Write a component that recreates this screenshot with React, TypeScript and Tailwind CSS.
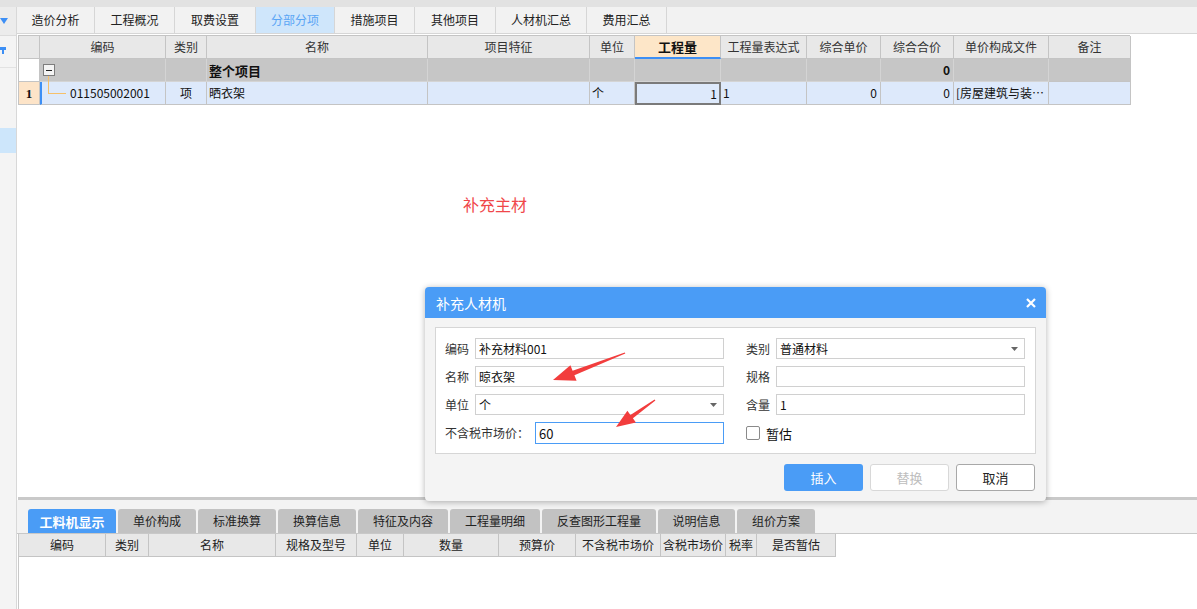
import React from "react";

const topTabs: { label: string; w: string; active?: boolean }[] = [
  { label: "造价分析", w: "w-[78px]" },
  { label: "工程概况", w: "w-[80px]" },
  { label: "取费设置", w: "w-[81px]" },
  { label: "分部分项", w: "w-[79px]", active: true },
  { label: "措施项目", w: "w-[80px]" },
  { label: "其他项目", w: "w-[81px]" },
  { label: "人材机汇总", w: "w-[91px]" },
  { label: "费用汇总", w: "w-[80px]" },
];

const mainCols =
  "grid grid-cols-[21px_126px_41px_221px_162px_45px_86px_86px_74px_73px_95px_82px]";

const headers = [
  "",
  "编码",
  "类别",
  "名称",
  "项目特征",
  "单位",
  "工程量",
  "工程量表达式",
  "综合单价",
  "综合合价",
  "单价构成文件",
  "备注",
];

const bottomTabs: { label: string; w: string; active?: boolean }[] = [
  { label: "工料机显示", w: "w-[88px]", active: true },
  { label: "单价构成", w: "w-[78px]" },
  { label: "标准换算", w: "w-[78px]" },
  { label: "换算信息", w: "w-[78px]" },
  { label: "特征及内容", w: "w-[90px]" },
  { label: "工程量明细", w: "w-[90px]" },
  { label: "反查图形工程量", w: "w-[114px]" },
  { label: "说明信息", w: "w-[77px]" },
  { label: "组价方案", w: "w-[78px]" },
];

const bottomHeaders: { label: string; w: string }[] = [
  { label: "编码", w: "w-[87px]" },
  { label: "类别", w: "w-[43px]" },
  { label: "名称", w: "w-[127px]" },
  { label: "规格及型号", w: "w-[81px]" },
  { label: "单位", w: "w-[47px]" },
  { label: "数量", w: "w-[95px]" },
  { label: "预算价", w: "w-[77px]" },
  { label: "不含税市场价", w: "w-[85px]" },
  { label: "含税市场价", w: "w-[65px]" },
  { label: "税率", w: "w-[31px]" },
  { label: "是否暂估", w: "w-[79px]" },
];

const Sidebar = () => (
  <div className="w-[17px] h-full bg-[#f4f4f4] border-r border-[#d8d8d8] flex flex-col">
    <div className="h-[29px] bg-[#ececec] border-b border-[#dcdcdc] pt-[11px]">
      <svg width="8" height="6" viewBox="0 0 8 6">
        <path d="M0 0h8L4 6z" fill="#3d8ff5" />
      </svg>
    </div>
    <div className="h-[32px] border-b border-[#e2e2e2] pt-[11px]">
      <div className="w-[6px] h-[3px] bg-[#3d8ff5]" />
      <div className="ml-[2px] w-[2px] h-[4px] bg-[#3d8ff5]" />
    </div>
    <div className="h-[60px]" />
    <div className="h-[25px] bg-[#cde6fb]" />
  </div>
);

const TopTabs = () => (
  <div className="h-[27px] bg-[#f2f2f2] border-b border-[#d6d6d6] flex">
    {topTabs.map((t) => (
      <div
        key={t.label}
        className={`${t.w} h-full border-r border-[#d6d6d6] flex items-center justify-center leading-none ${
          t.active ? "bg-[#cfe6fb] text-[#5aa5f5]" : "text-[#222]"
        }`}
      >
        {t.label}
      </div>
    ))}
  </div>
);

const MainGrid = () => (
  <div className={`${mainCols} w-[1112px] border-t border-l border-[#c4c4c4]`}>
    {/* header */}
    {headers.map((h, i) => (
      <div
        key={`h${i}`}
        className={`h-[23px] border-r border-b border-[#c4c4c4] flex items-center justify-center leading-none ${
          i === 6
            ? "bg-[#fde6c8] font-bold text-[13px] text-[#111] border-b-2 border-b-[#3d8ff5]"
            : "bg-[#e8e8e8] text-[#333]"
        }`}
      >
        {h}
      </div>
    ))}

    {/* 整个项目 */}
    <div className="h-[23px] bg-white border-r border-b border-[#c4c4c4]" />
    <div className="relative h-[23px] bg-[#c6c6c6] border-r border-b border-[#d4d4d4]">
      <div className="absolute left-[3px] top-[5px] w-[12px] h-[12px] border border-[#7d7d7d] bg-[#f4f4f4] flex items-center justify-center">
        <div className="w-[6px] h-px bg-[#222]" />
      </div>
      <div className="absolute left-[8px] top-[17px] bottom-[-1px] w-px bg-[#f6c06a]" />
    </div>
    <div className="h-[23px] bg-[#c6c6c6] border-r border-b border-[#d4d4d4]" />
    <div className="h-[23px] bg-[#c6c6c6] border-r border-b border-[#d4d4d4] flex items-center pl-[2px] font-bold text-[13px] leading-none">
      整个项目
    </div>
    {[0, 1, 2, 3, 4].map((k) => (
      <div key={`g${k}`} className="h-[23px] bg-[#c6c6c6] border-r border-b border-[#d4d4d4]" />
    ))}
    <div className="h-[23px] bg-[#c6c6c6] border-r border-b border-[#d4d4d4] flex items-center justify-end pr-[3px] font-bold leading-none">
      0
    </div>
    <div className="h-[23px] bg-[#c6c6c6] border-r border-b border-[#d4d4d4]" />
    <div className="h-[23px] bg-[#c6c6c6] border-r border-b border-[#c4c4c4]" />

    {/* row 1 */}
    <div className="h-[23px] bg-[#fde4c8] border-r border-b border-[#c4c4c4] flex items-center justify-center font-['Liberation_Serif',serif] font-bold text-[13px] leading-none">
      1
    </div>
    <div className="relative h-[23px] bg-[#dde9fb] border-r border-b border-[#c4c4c4] border-l-2 border-l-[#3d8ff5] flex items-center pl-[28px] leading-none">
      <div className="absolute left-[6px] top-0 h-[12px] w-[18px] border-l border-b border-[#f6c06a]" />
      011505002001
    </div>
    <div className="h-[23px] bg-[#dde9fb] border-r border-b border-[#c4c4c4] flex items-center justify-center leading-none">
      项
    </div>
    <div className="h-[23px] bg-[#dde9fb] border-r border-b border-[#c4c4c4] flex items-center pl-[2px] leading-none">
      晒衣架
    </div>
    <div className="h-[23px] bg-[#dde9fb] border-r border-b border-[#c4c4c4]" />
    <div className="h-[23px] bg-[#dde9fb] border-r border-b border-[#c4c4c4] flex items-center pl-[2px] leading-none">
      个
    </div>
    <div className="h-[23px] bg-[#dde9fb] border-2 border-[#7a7a7a] flex items-center justify-end pr-[2px] leading-none">
      1
    </div>
    <div className="h-[23px] bg-[#dde9fb] border-r border-b border-[#c4c4c4] flex items-center pl-[2px] leading-none">
      1
    </div>
    <div className="h-[23px] bg-[#dde9fb] border-r border-b border-[#c4c4c4] flex items-center justify-end pr-[3px] leading-none">
      0
    </div>
    <div className="h-[23px] bg-[#dde9fb] border-r border-b border-[#c4c4c4] flex items-center justify-end pr-[3px] leading-none">
      0
    </div>
    <div className="h-[23px] bg-[#dde9fb] border-r border-b border-[#c4c4c4] flex items-center pl-[2px] leading-none whitespace-nowrap overflow-hidden">
      [房屋建筑与装…
    </div>
    <div className="h-[23px] bg-[#dde9fb] border-r border-b border-[#c4c4c4]" />
  </div>
);

const BottomPanel = () => (
  <div className="flex-1 flex flex-col">
    <div className="h-[34px] bg-[#f3f3f3] border-b border-[#c8c8c8] pl-[11px] flex items-end gap-[2px]">
      {bottomTabs.map((t) => (
        <div
          key={t.label}
          className={`${t.w} h-[24px] rounded-t-[3px] flex items-center justify-center leading-none ${
            t.active ? "bg-[#4a9cf6] text-white font-bold text-[13px]" : "bg-[#c2c2c2] text-[#222]"
          }`}
        >
          {t.label}
        </div>
      ))}
    </div>
    <div className="flex-1 bg-white ml-px border-l border-[#c8c8c8]">
      <div className="flex h-[23px]">
        {bottomHeaders.map((h) => (
          <div
            key={h.label}
            className={`${h.w} h-full bg-[#e8e8e8] border-r border-b border-[#c4c4c4] flex items-center justify-center leading-none text-[#222] whitespace-nowrap`}
          >
            {h.label}
          </div>
        ))}
      </div>
    </div>
  </div>
);

const SelectArrow = () => (
  <svg width="7" height="4" viewBox="0 0 7 4" className="mr-[6px]">
    <path d="M0 0h7L3.5 4z" fill="#666" />
  </svg>
);

const Dialog = () => (
  <div className="absolute left-[425px] top-[287px] w-[621px] h-[214px] rounded-[4px] bg-[#f4f4f4] shadow-[0_1px_6px_rgba(0,0,0,0.3)] flex flex-col">
    <div className="h-[31px] rounded-t-[4px] bg-[#4a9cf6] flex items-center justify-between pl-[11px] pr-[10px]">
      <span className="text-white text-[14px] leading-none">补充人材机</span>
      <svg width="10" height="10" viewBox="0 0 10 10">
        <path d="M1 1l8 8M9 1l-8 8" stroke="#fff" strokeWidth="2.2" />
      </svg>
    </div>
    <div className="mt-[9px] ml-[10px] w-[601px] h-[127px] bg-white border border-[#d6d6d6] pl-[9px] pt-[10px]">
      <div className="grid grid-cols-[279px_279px] gap-x-[22px] gap-y-[7px]">
        {/* row 1 */}
        <div className="flex items-center">
          <span className="w-[30px] text-[#333] leading-none">编码</span>
          <div className="flex-1 h-[21px] border border-[#d0d0d0] flex items-center pl-[3px] leading-none">
            补充材料001
          </div>
        </div>
        <div className="flex items-center">
          <span className="w-[30px] text-[#333] leading-none">类别</span>
          <div className="flex-1 h-[21px] border border-[#d0d0d0] flex items-center justify-between pl-[3px] leading-none">
            普通材料
            <SelectArrow />
          </div>
        </div>
        {/* row 2 */}
        <div className="flex items-center">
          <span className="w-[30px] text-[#333] leading-none">名称</span>
          <div className="flex-1 h-[21px] border border-[#d0d0d0] flex items-center pl-[3px] leading-none">
            晾衣架
          </div>
        </div>
        <div className="flex items-center">
          <span className="w-[30px] text-[#333] leading-none">规格</span>
          <div className="flex-1 h-[21px] border border-[#d0d0d0]" />
        </div>
        {/* row 3 */}
        <div className="flex items-center">
          <span className="w-[30px] text-[#333] leading-none">单位</span>
          <div className="flex-1 h-[21px] border border-[#d0d0d0] flex items-center justify-between pl-[3px] leading-none">
            个
            <SelectArrow />
          </div>
        </div>
        <div className="flex items-center">
          <span className="w-[30px] text-[#333] leading-none">含量</span>
          <div className="flex-1 h-[21px] border border-[#d0d0d0] flex items-center pl-[3px] leading-none">
            1
          </div>
        </div>
        {/* row 4 */}
        <div className="flex items-center">
          <span className="w-[90px] text-[#333] leading-none">不含税市场价：</span>
          <div className="flex-1 h-[22px] border border-[#4a9cf6] flex items-center pl-[3px] leading-none text-[13px]">
            60
          </div>
        </div>
        <div className="flex items-center">
          <div className="w-[14px] h-[14px] border border-[#8a8a8a] rounded-[2px] bg-white" />
          <span className="ml-[6px] text-[13px] leading-none">暂估</span>
        </div>
      </div>
    </div>
    <div className="mt-[10px] mr-[11px] flex justify-end gap-[7px]">
      <button className="w-[79px] h-[27px] rounded-[3px] bg-[#4a9cf6] text-white text-[13px] leading-none">
        插入
      </button>
      <button className="w-[79px] h-[27px] rounded-[3px] bg-white border border-[#d8d8d8] text-[#bdbdbd] text-[13px] leading-none">
        替换
      </button>
      <button className="w-[79px] h-[27px] rounded-[3px] bg-white border border-[#a8a8a8] text-[#222] text-[13px] leading-none">
        取消
      </button>
    </div>
  </div>
);

const Arrows = () => (
  <svg
    className="absolute left-0 top-0 pointer-events-none"
    width="1197"
    height="609"
    viewBox="0 0 1197 609"
  >
    <polygon
      points="624.8,352.4 572.6,370.7 570.4,365.3 553,380 576.6,380.7 574.4,375.3 625.3,353.6"
      fill="#f23d3d"
    />
    <polygon
      points="654.6,399.5 630.4,415 627.4,410.7 616,427 635.9,422.5 632.9,418.2 655.4,400.5"
      fill="#f23d3d"
    />
  </svg>
);

export default function App() {
  return (
    <div className="relative w-[1197px] h-[609px] overflow-hidden bg-white font-['Noto_Sans_CJK_SC',sans-serif] text-[12px] text-[#111]">
      <div className="h-[7px] bg-[#e2e2e2]" />
      <div className="flex h-[602px]">
        <Sidebar />
        <div className="flex-1 flex flex-col">
          <TopTabs />
          <div className="h-[463px] bg-white pl-px pt-px">
            <MainGrid />
            <div className="mt-[88px] ml-[445px] text-[16px] leading-[22px] text-[#f0474a]">
              补充主材
            </div>
          </div>
          <div className="h-[3px] bg-[#c9c9c9] ml-px" />
          <BottomPanel />
        </div>
      </div>
      <Dialog />
      <Arrows />
    </div>
  );
}
